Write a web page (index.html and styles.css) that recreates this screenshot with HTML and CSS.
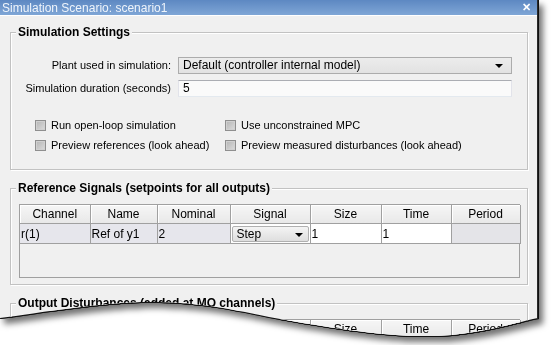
FILE: index.html
```html
<!DOCTYPE html>
<html lang="en">
<head>
    <meta charset="UTF-8">
    <title>Simulation Scenario: scenario1</title>
    <link rel="stylesheet" href="styles.css">
</head>
<body>
    <div class="shot">
        <div class="win">
            <div class="titlebar">
                <span class="title">Simulation Scenario: scenario1</span>
                <span class="close">✕</span>
            </div>

            <div class="content">
                <div class="group settings">
                    <h2>Simulation Settings</h2>
                    <div class="form">
                        <label>Plant used in simulation:</label>
                        <div class="combo">Default (controller internal model)<span class="arrow"></span></div>
                        <label>Simulation duration (seconds)</label>
                        <div class="field">5</div>
                    </div>
                    <div class="checks">
                        <div class="check"><span class="box"></span>Run open-loop simulation</div>
                        <div class="check"><span class="box"></span>Use unconstrained MPC</div>
                        <div class="check"><span class="box"></span>Preview references (look ahead)</div>
                        <div class="check"><span class="box"></span>Preview measured disturbances (look ahead)</div>
                    </div>
                </div>

                <div class="group signals">
                    <h2>Reference Signals (setpoints for all outputs)</h2>
                    <div class="grid">
                        <table>
                            <colgroup>
                                <col style="width:70px"><col style="width:67px"><col style="width:73px"><col style="width:80px">
                                <col style="width:71px"><col style="width:70px"><col style="width:69px">
                            </colgroup>
                            <tr>
                                <th>Channel</th><th>Name</th><th>Nominal</th><th>Signal</th><th>Size</th><th>Time</th><th>Period</th>
                            </tr>
                            <tr>
                                <td>r(1)</td><td>Ref of y1</td><td>2</td>
                                <td class="sig"><div class="cell-combo">Step<span class="arrow"></span></div></td>
                                <td class="edit">1</td><td class="edit">1</td><td class="off"></td>
                            </tr>
                        </table>
                    </div>
                </div>

                <div class="group disturb">
                    <h2>Output Disturbances (added at MO channels)</h2>
                    <div class="grid">
                        <table>
                            <colgroup>
                                <col style="width:70px"><col style="width:67px"><col style="width:73px"><col style="width:80px">
                                <col style="width:71px"><col style="width:70px"><col style="width:69px">
                            </colgroup>
                            <tr>
                                <th>Channel</th><th>Name</th><th>Nominal</th><th>Signal</th><th>Size</th><th>Time</th><th>Period</th>
                            </tr>
                        </table>
                    </div>
                </div>
            </div>
        </div>
    </div>
</body>
</html>
```

FILE: styles.css
```css
body {
    margin: 0;
    background: #fff;
    font-family: "Liberation Sans", Arial, sans-serif;
    font-size: 12px;
    color: #000;
}
.shot {
    width: 548px;
    filter: drop-shadow(0 1px 0 #111) drop-shadow(1px 0 0 #111) drop-shadow(4px 5px 3px rgba(0,0,0,0.55));
}
.win {
    width: 537px;
    height: 345px;
    overflow: hidden;
    background: #f0f0f0;
    border-right: 1px solid #2a2a2a;
    clip-path: path('M0 0 H538 V318 C 510 324, 470 337, 420 336 C 380 336, 320 326, 280 319 C 240 312, 210 302, 150 302 C 100 302, 40 313, 0 318 Z');
}
.titlebar {
    height: 15px;
    border-bottom: 1px solid #fff;
    background: linear-gradient(#5d88c2, #7fa6d6);
    display: flex;
    justify-content: space-between;
    align-items: center;
    color: #eef4fb;
    font-size: 12px;
    padding: 0 6px 0 2px;
}
.close {
    font-size: 11px;
    font-weight: bold;
    color: #fff;
}
.content {
    padding: 0 9px 0 10px;
}
.group {
    border: 1px solid #c2c2c2;
    box-shadow: inset 1px 1px 0 #fff, 1px 1px 0 #fff;
    padding: 0 0 14px;
}
.group h2 {
    display: table;
    margin: -8px 0 0 5px;
    padding: 0 2px;
    background: #f0f0f0;
    font-size: 12px;
    font-weight: bold;
    line-height: 15px;
}
.settings {
    margin-top: 16px;
}
.form {
    display: grid;
    grid-template-columns: 160px 334px;
    column-gap: 7px;
    row-gap: 6px;
    margin-top: 17px;
}
.form label {
    text-align: right;
    line-height: 17px;
    font-size: 11px;
}
.combo, .field {
    position: relative;
    height: 15px;
    line-height: 15px;
    padding-left: 4px;
    border: 1px solid #acacac;
}
.combo {
    background: linear-gradient(#ececec, #e2e2e2);
}
.field {
    background: #fafafa;
    border-color: #abadb3 #e2e3ea #e3e9ef #e2e3ea;
}
.arrow {
    position: absolute;
    right: 8px;
    top: 6px;
    border-left: 4px solid transparent;
    border-right: 4px solid transparent;
    border-top: 4px solid #000;
}
.checks {
    display: grid;
    grid-template-columns: 190px 1fr;
    padding-left: 24px;
    margin-top: 18px;
    font-size: 11px;
}
.check {
    display: flex;
    align-items: center;
    height: 20px;
}
.box {
    width: 9px;
    height: 9px;
    margin-right: 5px;
    border: 1px solid #8f8f8f;
    background: linear-gradient(135deg, #b4b4b4, #dcdcdc);
    box-shadow: inset 0 0 0 1px #d0d0d0;
}
.signals {
    margin-top: 18px;
    padding-bottom: 6px;
}
.disturb {
    margin-top: 18px;
}
.grid {
    margin: 8px 7px 0 8px;
    height: 72px;
    border: 1px solid #a0a0a0;
    background: #f0f0f0;
}
table {
    border-collapse: collapse;
    table-layout: fixed;
    width: 500px;
    font-size: 12px;
}
th {
    height: 18px;
    padding: 0;
    font-weight: normal;
    background: linear-gradient(#f6f6f6, #e8e8e8);
    border-right: 1px solid #a0a0a0;
    border-bottom: 1px solid #a0a0a0;
    box-shadow: inset 1px 1px 0 #fff;
}
td {
    height: 17px;
    padding: 0 0 0 1px;
    background: #e6e6ec;
    border-right: 1px solid #a0a0a0;
    border-bottom: 1px solid #a0a0a0;
    white-space: nowrap;
}
td.edit {
    background: #fff;
}
td.off {
    background: #e4e4e8;
}
td.sig {
    padding: 1px;
    background: #fff;
}
.cell-combo {
    position: relative;
    height: 14px;
    line-height: 14px;
    padding-left: 4px;
    border: 1px solid #b0b0b0;
    border-radius: 2px;
    background: linear-gradient(#f4f4f4, #dedede);
}
.cell-combo .arrow {
    right: 5px;
}
```
